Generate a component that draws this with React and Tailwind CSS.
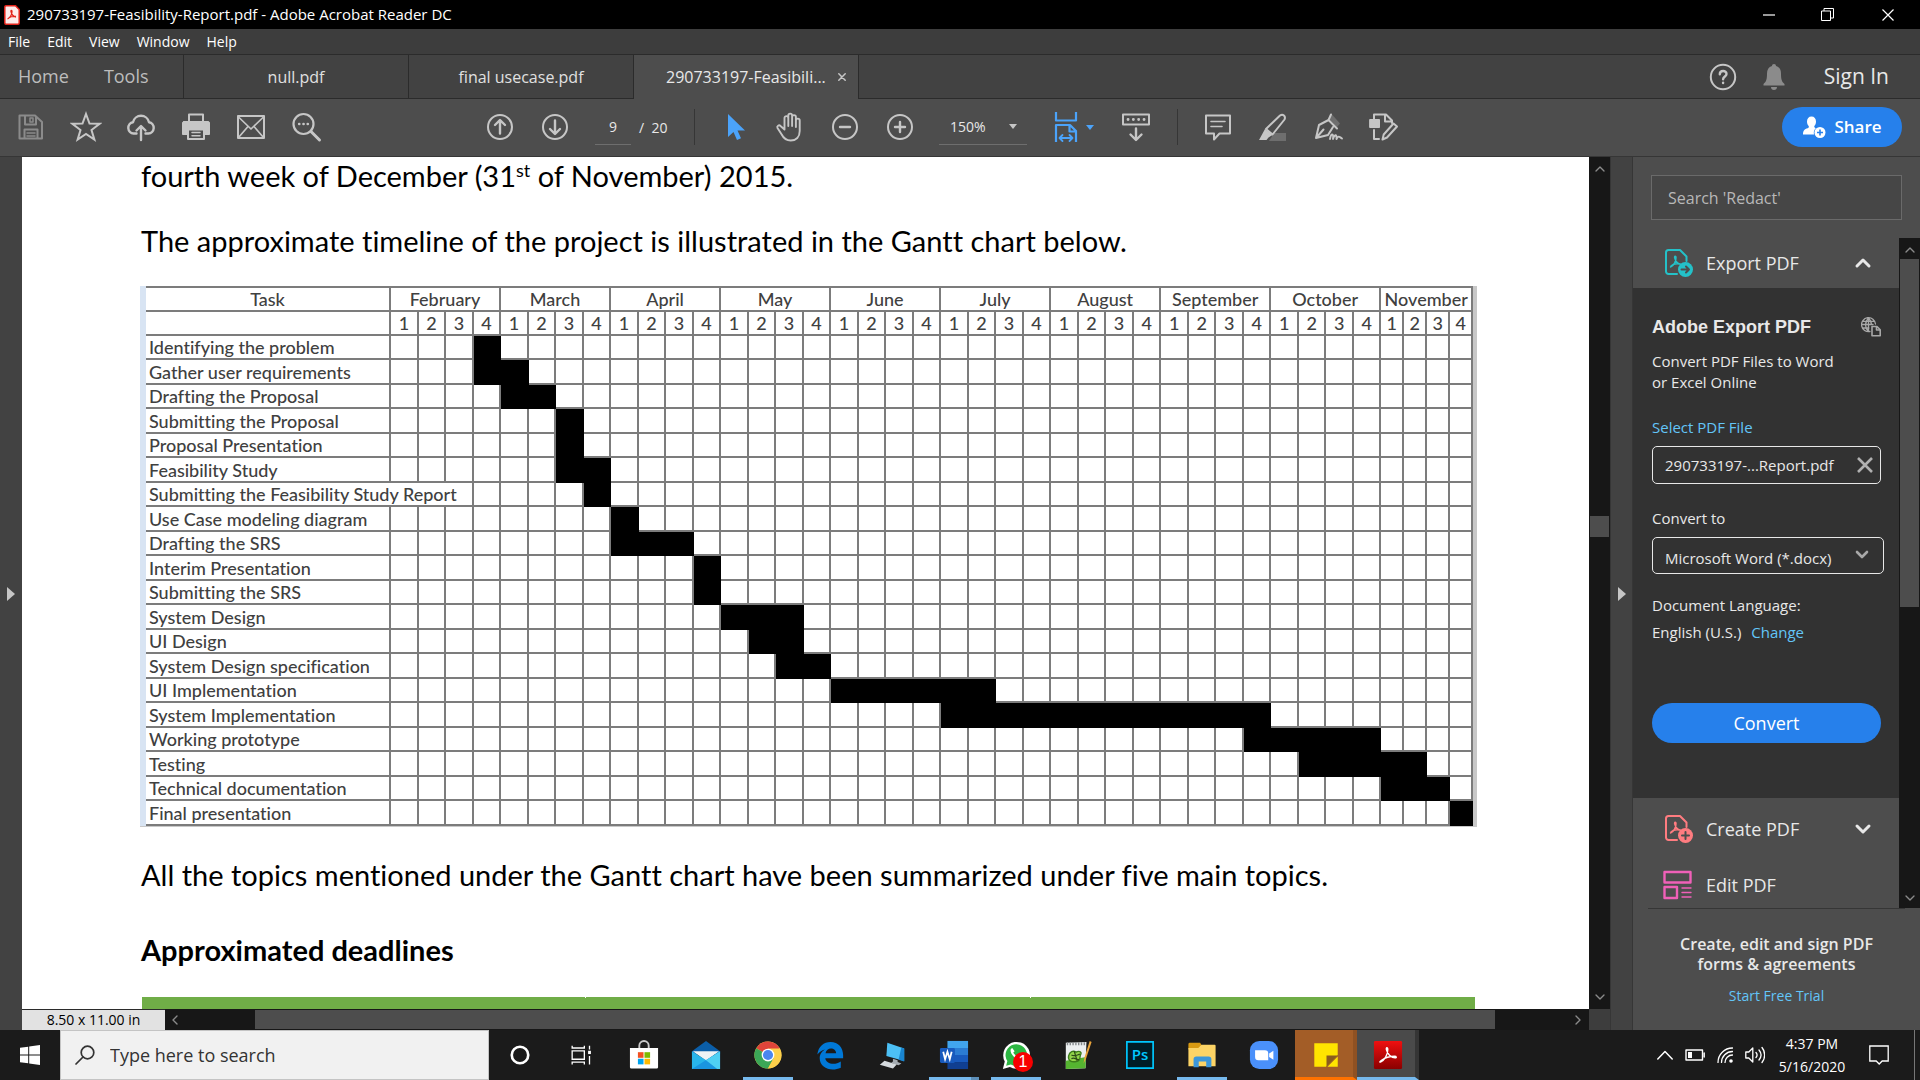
import React from 'react';
import { ChevronUp, ChevronDown, ChevronLeft, ChevronRight } from 'lucide-react';

function Icon({ children, className = 'size-8', box = '0 0 32 32', width = 2 }) {
  return (
    <svg viewBox={box} className={className} fill="none" stroke="currentColor" strokeWidth={width} strokeLinecap="round" strokeLinejoin="round" aria-hidden="true">
      {children}
    </svg>
  );
}

/* ---------- title, menu and tab bars ---------- */

function TitleBar() {
  return (
    <header className="flex h-[29px] shrink-0 items-center bg-black text-white">
      <svg viewBox="0 0 16 20" className="ml-1 h-5 w-4" aria-hidden="true">
        <path d="M2 .8h9.500l3.700 3.700V18a1.200 1.200 0 0 1-1.200 1.200H2A1.200 1.200 0 0 1 .8 18V2A1.200 1.200 0 0 1 2 .8Z" fill="#fdeceb" stroke="#e2231a" strokeWidth="1.500" />
        <path d="M3.500 14c2.500-1 4.500-4.500 4.500-7.500 0-1.500-1.400-1.300-1 .2.500 2.500 2.500 5 5 5.300M4.500 13c2-1.300 4.500-1.800 7.500-1.500" fill="none" stroke="#e2231a" strokeWidth="1.300" />
      </svg>
      <h1 className="ml-[7px] text-[15px]">290733197-Feasibility-Report.pdf - Adobe Acrobat Reader DC</h1>
      <div className="ml-auto flex h-full">
        <button aria-label="Minimize" className="flex w-[58px] items-center justify-center">
          <svg viewBox="0 0 12 12" className="size-3"><path d="M0 6h12" stroke="#fff" strokeWidth="1.200" /></svg>
        </button>
        <button aria-label="Restore" className="flex w-[58px] items-center justify-center">
          <svg viewBox="0 0 13 13" className="size-[13px]" fill="none" stroke="#fff"><path d="M.5 3h9v9.500h-9zM3 3V.5h9.500V10h-3" /></svg>
        </button>
        <button aria-label="Close" className="flex w-16 items-center justify-center">
          <svg viewBox="0 0 12 12" className="size-3" stroke="#fff" strokeWidth="1.200"><path d="M.5.5l11 11M11.500.5l-11 11" /></svg>
        </button>
      </div>
    </header>
  );
}

function MenuBar() {
  return (
    <nav className="flex h-[26px] shrink-0 items-center gap-[17px] border-b border-[#2b2b2b] bg-[#3d3d3d] pl-2 text-[14px] text-white">
      {['File', 'Edit', 'View', 'Window', 'Help'].map((m) => (
        <button key={m}>{m}</button>
      ))}
    </nav>
  );
}

function TabBar() {
  return (
    <div className="flex h-[44px] shrink-0 bg-[#424242]">
      <div className="flex w-[183px] items-center gap-[35px] border-b border-[#2b2b2b] pl-[18px] text-[18px] text-[#bdbdbd]">
        <button>Home</button>
        <button>Tools</button>
      </div>
      <button className="w-[225px] border-b border-l border-[#2b2b2b] text-[16px] text-[#e0e0e0]">null.pdf</button>
      <button className="w-[226px] border-x border-b border-[#2b2b2b] text-[16px] text-[#e0e0e0]">final usecase.pdf</button>
      <div className="flex w-[225px] items-center border-r border-[#2b2b2b] bg-[#4d4d4d] pl-8 text-[16px] text-[#e8e8e8]">
        <span>290733197-Feasibili...</span>
        <button aria-label="Close tab" className="ml-3 text-[#c6c6c6]">
          <Icon box="0 0 8 8" className="size-2" width="1.500"><path d="M.8.8l6.400 6.400M7.200.8L.8 7.200" /></Icon>
        </button>
      </div>
      <div className="flex flex-1 items-center justify-end border-b border-[#2b2b2b] pr-[31px] text-[#c6c6c6]">
        <button aria-label="Help" className="mr-[26px]">
          <Icon className="size-7" box="0 0 28 28">
            <circle cx="14" cy="14" r="12.200" />
            <path d="M10.800 11.300c0-4.300 6.700-4.200 6.700-.4 0 2.500-3.400 2.600-3.400 5.300M14.100 19.600v.4" strokeWidth="2.400" />
          </Icon>
        </button>
        <button aria-label="Notifications" className="mr-[39px] text-[#8b8b8b]">
          <svg viewBox="0 0 22 26" className="h-[26px] w-[22px]" fill="currentColor">
            <path d="M11 0c1.300 0 2 .8 2 1.900 3.500 1 5 3.800 5 7.600 0 6 .7 8 3.500 10.500v1.500H.5V20C3.300 17.500 4 15.500 4 9.500c0-3.800 1.500-6.600 5-7.600C9 .8 9.700 0 11 0ZM8 23h6c0 1.700-1.200 3-3 3s-3-1.300-3-3Z" />
          </svg>
        </button>
        <button className="text-[21px] text-[#e8e8e8]">Sign In</button>
      </div>
    </div>
  );
}

/* ---------- toolbar ---------- */

function Tool({ label, className = 'text-[#c6c6c6]', children }) {
  return (
    <button aria-label={label} className={`flex w-[55px] shrink-0 items-center justify-center ${className}`}>
      {children}
    </button>
  );
}

function Divider() {
  return <div className="h-9 w-px shrink-0 bg-[#363636]" />;
}

function Caret() {
  return <svg viewBox="0 0 8 5" className="h-[5px] w-2" fill="currentColor" aria-hidden="true"><path d="M0 0h8L4 5z" /></svg>;
}

function Toolbar() {
  return (
    <div className="flex h-[58px] shrink-0 items-center border-b border-[#363636] bg-[#4d4d4d] pb-px pl-[3px] text-[#e8e8e8]">
      <Tool label="Save" className="text-[#8b8b8b]">
        <Icon>
          <path d="M4.500 4.500h15.500l7 6.500v16.500H4.500zM10 4.500v9h11V5.500M9.500 27.500V18.500h13v9" />
          <path d="M15 7h3v4h-3zM12 22h8M12 25h8" strokeWidth="1.500" />
        </Icon>
      </Tool>
      <Tool label="Star"><Icon><path d="M16 3l3.500 9.500 10 .3-8 6.200 2.900 9.700L16 23l-8.400 5.700L10.500 19l-8-6.200 10-.3z" strokeLinejoin="miter" /></Icon></Tool>
      <Tool label="Upload"><Icon width="2.400"><path d="M11.500 22.500H8.600A5.700 5.700 0 0 1 8 11.200 8.200 8.200 0 0 1 24 11.200a5.700 5.700 0 0 1-.6 11.300h-2.900M16 29V15.500M11.500 19.500L16 15l4.500 4.500" /></Icon></Tool>
      <Tool label="Print">
        <Icon>
          <path d="M9 10.500V3.500h14v7" />
          <path d="M4 10.500h24a1.500 1.500 0 0 1 1.500 1.500v11.500h-5V19h-17v4.500h-5V12A1.500 1.500 0 0 1 4 10.500Z" fill="currentColor" strokeWidth="1" />
          <path d="M8 18.500h16v9.500H8z" fill="#4d4d4d" />
          <path d="M12 21.500h8M12 24.800h8" strokeWidth="1.500" />
        </Icon>
      </Tool>
      <Tool label="Email"><Icon><path d="M3 5h26v22H3z" /><path d="M3 5.500l13 12.500L29 5.500M3.500 26.500l9.500-11M28.500 26.500l-9.500-11" strokeWidth="1.700" /></Icon></Tool>
      <Tool label="Find"><Icon width="2.200"><circle cx="13.500" cy="13" r="10" /><path d="M21 20.500l8.500 8.500" strokeWidth="3" /><path d="M9.200 13h.1M13.500 13h.1M17.700 13h.1" strokeWidth="2.600" /></Icon></Tool>

      <div className="w-[139px] shrink" />
      <Tool label="Previous page"><Icon><circle cx="16" cy="16" r="12" /><path d="M16 22.500v-13M11 14l5-5 5 5" strokeWidth="2.400" /></Icon></Tool>
      <Tool label="Next page"><Icon><circle cx="16" cy="16" r="12" /><path d="M16 9.500v13M11 18l5 5 5-5" strokeWidth="2.400" /></Icon></Tool>
      <input aria-label="Page number" defaultValue="9" className="ml-[13px] h-9 w-9 shrink-0 border-b border-[#6e6e6e] bg-transparent text-center text-[14px]" />
      <span className="ml-2 w-[55px] shrink-0 whitespace-pre text-[14px]">/  20</span>
      <Divider />
      <div className="w-3 shrink" />
      <Tool label="Select" className="text-[#4ba3fa]">
        <Icon><path d="M9 3v23l5.500-5 3.500 8 4-1.800-3.500-7.700h7.500z" fill="currentColor" strokeWidth="0" /></Icon>
      </Tool>
      <Tool label="Pan">
        <Icon width="1.900">
          <path d="M10.500 18.500V7a1.900 1.900 0 0 1 3.800 0v8V4.500a1.900 1.900 0 0 1 3.800 0V15 6a1.900 1.900 0 0 1 3.800 0v10V9.500a1.900 1.900 0 0 1 3.800 0V20c0 6-3.500 9.500-9 9.500-4.500 0-7-2-9-6l-4.200-6.500c-1-2 1.500-3.500 3-2z" />
        </Icon>
      </Tool>
      <Tool label="Zoom out"><Icon><circle cx="16" cy="16" r="12" /><path d="M11 16h10" strokeWidth="2.400" /></Icon></Tool>
      <Tool label="Zoom in"><Icon><circle cx="16" cy="16" r="12" /><path d="M11 16h10M16 11v10" strokeWidth="2.400" /></Icon></Tool>
      <button className="ml-3 flex h-9 w-[88px] shrink-0 items-center justify-between border-b border-[#6e6e6e] pl-[11px] pr-2.5 text-[14px]">
        150%
        <span className="text-[#c6c6c6]"><Caret /></span>
      </button>
      <button aria-label="Fit width" className="ml-[23px] flex shrink-0 items-center gap-1 text-[#4ba3fa]">
        <Icon width="2.200">
          <path d="M6 1v8.500h20V1M6 31V14h14l6 6v11M19.500 14.500V20.500H26" strokeLinecap="butt" />
          <path d="M9.500 27h13M12.500 24l-3 3 3 3M19.500 24l3 3-3 3" strokeWidth="1.800" />
        </Icon>
        <Caret />
      </button>
      <div className="w-3.5 shrink" />
      <Tool label="Page display">
        <Icon>
          <path d="M3 3.500h26v10H3z" />
          <path d="M8 8.500h.1M13.300 8.500h.1M18.600 8.500h.1M24 8.500h.1" strokeWidth="2.800" />
          <path d="M16 17.500V28M10.500 23.500L16 29l5.500-5.500" strokeWidth="2.400" />
        </Icon>
      </Tool>
      <div className="w-3.5 shrink" />
      <Divider />
      <div className="w-3 shrink" />
      <Tool label="Comment"><Icon><path d="M4 4.500h24v18H17.500l-5.500 6v-6H4z" /><path d="M9 10.500h14M9 15.500h11" strokeWidth="1.600" /></Icon></Tool>
      <Tool label="Highlight">
        <Icon>
          <path d="M12 30l5-8h12v8z" fill="#6e6e6e" strokeWidth="0" />
          <path d="M9 18L23 4.500c3-2 6 .8 4.500 4L15.500 23.500z" />
          <path d="M8 18l7.500 6-4 2.500-2 2.500H2z" fill="currentColor" strokeWidth="0" />
        </Icon>
      </Tool>
      <Tool label="Sign">
        <Icon>
          <path d="M20 3.500l8 9-3 3.500-8-8z" fill="#6e6e6e" strokeWidth="0" />
          <path d="M19 3.500L16.500 9 25 17.500M16.500 9l-9.500 5L4 27l12-3 5-8M4.500 26.500l7-8" />
          <path d="M18 28c1-6 4-6 3 0 1-4 4-6 3.500 0 2-4 3-2 5.500-.5" strokeWidth="1.900" />
        </Icon>
      </Tool>
      <Tool label="More tools">
        <Icon>
          <path d="M7 9V3.500h12l6 6V12M18 4v6.500h7M7 19v9h5" />
          <path d="M3 8.500h9.500v8H3z" fill="currentColor" strokeWidth="1" />
          <path d="M15.500 28.500l1.200-5L26.500 12.500l3.500 3-10 11z" />
        </Icon>
      </Tool>
      <button className="ml-auto mr-[18px] flex h-10 w-[120px] shrink-0 items-center justify-center gap-2 rounded-full bg-[#2680eb] text-[17px] font-semibold text-white">
        <svg viewBox="0 0 24 24" className="size-6" fill="#fff" aria-hidden="true">
          <path d="M9.500 1.500c2.800 0 4.500 2 4.500 5 0 2-.8 3.500-1.700 4.500-.2 1 .2 1.700 1.500 2.300a6.500 6.500 0 0 0-1.800 6.200H1c0-4 1.500-5.300 4.700-6.200C7 12.800 7 12 6.700 11 5.800 10 5 8.500 5 6.500c0-3 1.700-5 4.500-5Z" />
          <circle cx="18" cy="17.500" r="5.500" />
          <path d="M18 14.500v6M15 17.500h6" stroke="#2680eb" strokeWidth="1.600" />
        </svg>
        Share
      </button>
    </div>
  );
}

/* ---------- document ---------- */

const months = ['February', 'March', 'April', 'May', 'June', 'July', 'August', 'September', 'October', 'November'];

// [task, first filled week, last filled week]
const tasks = [
  ['Identifying the problem', 3, 3],
  ['Gather user requirements', 3, 4],
  ['Drafting the Proposal', 4, 5],
  ['Submitting the Proposal', 6, 6],
  ['Proposal Presentation', 6, 6],
  ['Feasibility Study', 6, 7],
  ['Submitting the Feasibility Study Report', 7, 7],
  ['Use Case modeling diagram', 8, 8],
  ['Drafting the SRS', 8, 10],
  ['Interim Presentation', 11, 11],
  ['Submitting the SRS', 11, 11],
  ['System Design', 12, 14],
  ['UI Design', 13, 14],
  ['System Design specification', 14, 15],
  ['UI Implementation', 16, 21],
  ['System Implementation', 20, 31],
  ['Working prototype', 31, 35],
  ['Testing', 33, 37],
  ['Technical documentation', 36, 38],
  ['Final presentation', 39, 39],
];

const weeks = Array.from({ length: 40 }, (_, i) => i);

function weekWidth(i) {
  if (i >= 36) return 'w-[23px]';
  return i % 2 ? 'w-[27px]' : 'w-[28px]';
}

const cell = 'border-b-2 border-r-2 border-[#7c7c7c] p-0 font-medium';

function GanttChart() {
  return (
    <div className="mt-[27px] flex border-b border-r-4 border-[#c8c8c8]">
      <div className="w-1.5 shrink-0 bg-[#d8e4f3]" />
      <table className="w-full table-fixed border-separate border-spacing-0 whitespace-nowrap text-[18px] leading-[22px] text-[#404040]">
        <colgroup>
          <col className="w-[245px]" />
          {weeks.map((w) => <col key={w} className={weekWidth(w)} />)}
        </colgroup>
        <thead>
          <tr className="h-[26px]">
            <th scope="col" className={`${cell} border-t-2`}>Task</th>
            {months.map((m) => (
              <th key={m} scope="colgroup" colSpan={4} className={`${cell} border-t-2`}>{m}</th>
            ))}
          </tr>
          <tr className="h-6">
            <td className={cell} />
            {weeks.map((w) => <th key={w} scope="col" className={cell}>{(w % 4) + 1}</th>)}
          </tr>
        </thead>
        <tbody>
          {tasks.map(([name, from, to], row) => {
            const span = row === 6 ? 4 : 1;
            return (
              <tr key={name} className={row % 2 ? 'h-[25px]' : 'h-6'}>
                <th scope="row" colSpan={span} className={`${cell} pl-[3px] text-left`}>{name}</th>
                {weeks.slice(span - 1).map((w) => (
                  <td key={w} className={w >= from && w <= to ? 'border-b-2 border-r-2 border-black bg-black p-0' : cell} />
                ))}
              </tr>
            );
          })}
        </tbody>
      </table>
    </div>
  );
}

function Page() {
  return (
    <main className="min-w-0 flex-1 overflow-hidden bg-white pl-[118px] pr-[112px] pt-px font-[Lato,'Liberation_Sans',sans-serif] text-[29px] leading-[36px] text-black [font-variant-ligatures:none]">
      <p className="pl-px">fourth week of December (31<sup className="-top-2.5 text-[18px] leading-none">st</sup> of November) 2015.</p>
      <p className="mt-[29px] pl-px">The approximate timeline of the project is illustrated in the Gantt chart below.</p>
      <GanttChart />
      <p className="mt-[30px] pl-px">All the topics mentioned under the Gantt chart have been summarized under five main topics.</p>
      <h2 className="mt-[39px] pl-px text-[29px] font-bold">Approximated deadlines</h2>
      <div className="ml-0.5 mr-0.5 mt-[29px] grid h-10 grid-cols-3 bg-[#70ad47]">
        <div className="h-px border-r border-white" />
        <div className="h-px border-r border-white" />
      </div>
    </main>
  );
}

function DocumentPane() {
  return (
    <section className="flex min-w-0 flex-1 flex-col">
      <div className="flex min-h-0 flex-1">
        <Page />
        <div className="flex w-[21px] shrink-0 flex-col items-center bg-[#171717] text-[#8b8b8b]">
          <ChevronUp className="mt-1 size-4" />
          <div className="mt-[339px] h-[21px] w-[19px] bg-[#4d4d4d]" />
          <ChevronDown className="mb-1 mt-auto size-4" />
        </div>
      </div>
      <div className="flex h-[21px] shrink-0">
        <div className="flex w-[143px] items-center justify-center border-t border-[#2b2b2b] bg-[#e2e2e2] text-[14px] leading-5 text-black">8.50 x 11.00 in</div>
        <div className="flex flex-1 items-center bg-[#171717] text-[#8b8b8b]">
          <ChevronLeft className="mx-0.5 size-4" />
          <div className="ml-[70px] mr-[74px] h-[19px] flex-1 bg-[#4d4d4d]" />
          <ChevronRight className="ml-px mr-[3px] size-4" />
        </div>
        <div className="w-[21px] bg-[#3d3d3d]" />
      </div>
    </section>
  );
}

/* ---------- tools pane ---------- */

function PdfFileIcon({ children }) {
  return (
    <Icon className="size-[30px]" box="0 0 30 30">
      <path d="M13 26H4.500A2.500 2.500 0 0 1 2 23.500v-19A2.500 2.500 0 0 1 4.500 2H16l6.500 6.500V13" />
      <path d="M6.500 19c3-1.200 5.700-5.500 5.500-9.500 0-1.800-1.800-1.500-1.300.3.700 3 3 6 6.300 6.400M7 18c1.500-1.500 5-2.500 8.500-2" strokeWidth="1.500" />
      <circle cx="21.500" cy="21.500" r="7.500" fill="currentColor" stroke="none" />
      {children}
    </Icon>
  );
}

function ToolsPane() {
  return (
    <aside className="flex w-[287px] shrink-0 flex-col bg-[#4d4d4d] text-[#e8e8e8]">
      <input aria-label="Search tools" placeholder="Search 'Redact'" className="mx-[18px] mb-[18px] mt-[18px] h-[45px] shrink-0 border border-[#6a6a6a] bg-[#464646] px-4 text-[16px] placeholder:text-[#b8b8b8]" />
      <div className="flex min-h-0 flex-1">
        <div className="min-w-0 flex-1 overflow-hidden">
          <button className="flex h-[50px] w-full items-center pl-[31px] pr-[26px] text-[18px]">
            <span className="text-[#24c1c8]"><PdfFileIcon><path d="M17.500 21.500h7.500M22 18.500l3 3-3 3" stroke="#4d4d4d" /></PdfFileIcon></span>
            <span className="ml-3">Export PDF</span>
            <Icon className="ml-auto size-5" box="0 0 20 20" width="3"><path d="M4 13l6-6 6 6" /></Icon>
          </button>

          <div className="flex flex-col bg-[#323232] pb-[55px] pl-[19px] pr-[15px] pt-[27px] text-[15px] leading-5">
            <div className="mr-[3px] flex items-center justify-between">
              <h2 className="font-['Liberation_Sans',sans-serif] text-[18px] font-bold leading-6">Adobe Export PDF</h2>
              <Icon className="size-5 text-[#a8a8a8]" box="0 0 20 20" width="1.300">
                <path d="M9 14.500A7 7 0 1 1 14.500 7M7.500 1c-4 4-4 9.500 0 13.500M7.500 1c2 2 3 4 3 6.500M1 7.500h11M2 4.300h11M2 11h6M7.500 1v13.500" />
                <path d="M11 9.500h5l3.200 3.200v6H11zM15.500 10v3h3.500" strokeWidth="1.600" />
              </Icon>
            </div>
            <p className="mt-3 leading-[21px]">Convert PDF Files to Word<br />or Excel Online</p>
            <label htmlFor="source-file" className="mt-6 text-[#63c5f8]">Select PDF File</label>
            <div className="mr-[3px] mt-[9px] flex h-[38px] items-center rounded-[5px] border border-[#e8e8e8] pl-3 pr-[7px]">
              <input id="source-file" readOnly value="290733197-...Report.pdf" className="min-w-0 flex-1 bg-transparent" />
              <button aria-label="Remove file" className="text-[#b0b0b0]">
                <Icon className="size-4" box="0 0 16 16" width="2.600"><path d="M1 1l14 14M15 1L1 15" strokeLinecap="butt" /></Icon>
              </button>
            </div>
            <label htmlFor="target-format" className="mt-6">Convert to</label>
            <div className="relative mt-[9px]">
              <select id="target-format" className="block h-[37px] w-full appearance-none rounded-[5px] border border-[#e8e8e8] bg-[#323232] pl-3 pr-8 pt-1">
                <option>Microsoft Word (*.docx)</option>
              </select>
              <Icon className="pointer-events-none absolute right-3.5 top-2.5 size-4 text-[#a8a8a8]" box="0 0 16 16" width="2.600"><path d="M3 5l5 5 5-5" /></Icon>
            </div>
            <p className="mt-[21px]">Document Language:</p>
            <p className="mt-[7px]">English (U.S.) <a href="#language" className="ml-1.5 text-[#63c5f8]">Change</a></p>
            <button className="mr-[3px] mt-[61px] h-10 rounded-full bg-[#2680eb] text-[18px] text-white">Convert</button>
          </div>

          <button className="mt-[3px] flex h-14 w-full items-center pl-[31px] pr-[26px] text-[18px]">
            <span className="text-[#ff7c80]"><PdfFileIcon><path d="M18 21.500h7M21.500 18v7" stroke="#4d4d4d" /></PdfFileIcon></span>
            <span className="ml-3">Create PDF</span>
            <Icon className="ml-auto size-5" box="0 0 20 20" width="3"><path d="M4 7l6 6 6-6" /></Icon>
          </button>
          <button className="flex h-14 w-full items-center pl-[30px] text-[18px]">
            <Icon className="size-[30px] text-[#f060b8]" box="0 0 30 30">
              <path d="M1.500 2h26v10.500h-26zM1.500 17h12.500v11H1.500z" strokeWidth="2.400" />
              <path d="M19 18h9M19 22.500h9M19 27h9" strokeWidth="1.400" />
            </Icon>
            <span className="ml-[13px]">Edit PDF</span>
          </button>
        </div>
        <div className="flex w-[21px] shrink-0 flex-col items-center bg-[#171717] text-[#8b8b8b]">
          <ChevronUp className="mb-px mt-1 size-4" />
          <div className="h-[52%] w-[19px] bg-[#4d4d4d]" />
          <ChevronDown className="mb-0.5 mt-auto size-4" />
        </div>
      </div>
      <div className="mx-[15px] flex h-[122px] shrink-0 flex-col items-center border-t border-[#363636] pt-[25px] text-center text-[16px] font-semibold leading-5">
        <p>Create, edit and sign PDF<br />forms &amp; agreements</p>
        <a href="#trial" className="mt-3 text-[14px] font-normal text-[#63c5f8]">Start Free Trial</a>
      </div>
    </aside>
  );
}

/* ---------- task bar ---------- */

function Art({ box = '0 0 32 32', children }) {
  return <svg viewBox={box} className="size-[30px]" fill="none" aria-hidden="true">{children}</svg>;
}

const apps = [
  ['Cortana', '', <Art><circle cx="16" cy="16" r="8.800" stroke="#fff" strokeWidth="2.800" /></Art>],
  ['Task View', '', <Art><path d="M5.500 11.500h13v9h-13zM5.500 6v2.500h13V6M5.500 26v-2.500h13V26M24 6v4M24 17v9" stroke="#fff" strokeWidth="1.400" /><path d="M22.500 11.500h3v3.500h-3z" fill="#fff" /></Art>],
  ['Microsoft Store', '', (
    <Art>
      <path d="M11 10V6a5 5 0 0 1 10 0v4" stroke="#c9c9c9" strokeWidth="2" />
      <path d="M1 8.500h30V29a1.500 1.500 0 0 1-1.500 1.500h-27A1.500 1.500 0 0 1 1 29z" fill="#fff" />
      <path d="M9.500 13h6v6h-6z" fill="#f25022" /><path d="M16.500 13h6v6h-6z" fill="#7fba00" />
      <path d="M9.500 20h6v6h-6z" fill="#00a4ef" /><path d="M16.500 20h6v6h-6z" fill="#ffb900" />
    </Art>
  )],
  ['Mail', '', (
    <Art>
      <path d="M1 12L16 1l15 11v3H1z" fill="#0b5ea8" /><path d="M2 12h28L16 22z" fill="#eef2f5" />
      <path d="M1 12l30 19H1z" fill="#28b4ea" /><path d="M31 12v19H1z" fill="#1a95e0" /><path d="M31 12v19H28L16 21.500z" fill="#4fd0f3" />
    </Art>
  )],
  ['Google Chrome', 'open', (
    <Art>
      <circle cx="16" cy="16" r="14.500" fill="#fdd04b" />
      <path d="M16 16L3.500 8.700A14.500 14.500 0 0 1 28.500 8.700z" fill="#e0453a" /><path d="M3.500 8.700A14.500 14.500 0 0 0 16 30.500l6-11L16 16z" fill="#3ba757" />
      <path d="M28.500 9H16l6 10.500L16 30.500A14.500 14.500 0 0 0 28.500 9Z" fill="#fdd04b" />
      <circle cx="16" cy="16" r="6.800" fill="#fff" /><circle cx="16" cy="16" r="5.400" fill="#4a86f0" />
    </Art>
  )],
  ['Microsoft Edge', '', <Art><path d="M2.500 15.500C3.500 6.500 9.500 2 16.500 2 25 2 30 8 30 16v3.500H11c.5 6 10 8 16.500 3.500v6.500C18 34 5 30.500 5 19.500 5 15 7.500 11.500 11 10c-3 .3-6.500 2.500-8.500 5.500ZM11.200 14h11.300c0-6.500-10.300-7-11.300 0Z" fill="#0078d7" /></Art>],
  ['This PC', '', (
    <Art>
      <path d="M11 3l18 6v13.500L10 17z" fill="#4cc0f5" /><path d="M29 9v14l-6-2 3-13z" fill="#1985d0" />
      <path d="M17 20l5 1.500v2l4 1.500-3 2-8-2.500 2-1.500z" fill="#a5acb2" /><path d="M8 22l13 4-4 4.500-14-4z" fill="#d5dade" />
    </Art>
  )],
  ['Word', 'group', (
    <Art>
      <path d="M9 1h22v8H9z" fill="#41a5ee" /><path d="M9 8.500h22v8H9z" fill="#2b7cd3" /><path d="M9 16h22v7.500H9z" fill="#185abd" /><path d="M9 23.500h22V31H9z" fill="#103f91" />
      <rect x="1" y="8.500" width="16" height="16" rx="1.500" fill="#185abd" /><path d="M4.500 12.500l2 8 2.500-8 2.500 8 2-8" stroke="#fff" strokeWidth="1.900" />
    </Art>
  )],
  ['WhatsApp', 'open', (
    <Art>
      <path d="M2 31l2-8A14.300 14.300 0 1 1 9.500 28.700z" fill="#fff" /><path d="M5.500 27.500l1.300-5A11.500 11.500 0 1 1 10.500 26z" fill="#2cb742" />
      <path d="M12 8.500c-3 1-2 5 1 8.500 3 3.500 7 5.500 9 3l-3-3-2 1-4-4.500 1.500-1.500z" fill="#fff" />
    </Art>
  )],
  ['Notepad++', '', (
    <Art>
      <path d="M3 3l22-1-1 28-21 1z" fill="#eceff0" /><path d="M3 22l21.500-4L24 30 3 31z" fill="#55b530" />
      <path d="M4 4h20" stroke="#85898b" strokeWidth="3" strokeDasharray="1.500 1.500" />
      <path d="M6 17c1-5 5-6 8-4 3-2 6 0 5 2-2 3 1 7-5 8-5 1-9-1-8-6Z" fill="#93d54a" stroke="#3c7d1b" strokeWidth="1.500" />
      <path d="M9 16c3 2 6 0 9-1M9 20c3-2 5 1 8 1M12 12l3 10" stroke="#2d4a18" strokeWidth="1.300" />
      <path d="M30.500 2l-6 18-2.500 5 .8-6L28.500 1z" fill="#e9a33a" />
    </Art>
  )],
  ['Photoshop', '', (
    <svg viewBox="0 0 32 32" className="size-[30px]" aria-hidden="true">
      <path d="M2 2h28v28H2z" fill="#001d26" stroke="#00c8ff" strokeWidth="1.800" />
      <text x="16" y="21.500" textAnchor="middle" fontSize="16" fontWeight="600" fontFamily="Open Sans, sans-serif" fill="#00c8ff">Ps</text>
    </svg>
  )],
  ['File Explorer', 'open', (
    <Art>
      <path d="M1.500 4.500A1.500 1.500 0 0 1 3 3h11l2 3V10H1.500z" fill="#d99a12" /><path d="M1.500 8.500H12L15.500 5H29.500a1 1 0 0 1 1 1v22h-29z" fill="#fcd466" />
      <path d="M7 29V20.500a3 3 0 0 1 3-3h13a3 3 0 0 1 3 3V29h-5.500V23h-8v6z" fill="#3b97da" />
    </Art>
  )],
  ['Zoom', '', <Art><rect x="1" y="1" width="30" height="30" rx="10" fill="#4a90fa" /><path d="M6.500 11h10.500a3.500 3.500 0 0 1 3.500 3.500V21.500H10A3.500 3.500 0 0 1 6.500 18zM21.500 14.500l4.500-3v9.500l-4.500-3z" fill="#fff" /></Art>],
  ['Sticky Notes', 'alert', <Art><path d="M3.500 3.500h25V16L16 28.500H3.500z" fill="#ffe500" /><path d="M16.500 16.500h12l-12 12z" fill="#8a5c1e" /><path d="M17.500 28.500l11-11v11z" fill="#ffe500" /></Art>],
  ['Acrobat Reader', 'active', (
    <Art>
      <defs><linearGradient id="acro" x1="0" y1="0" x2="0" y2="1"><stop offset="0" stopColor="#f01010" /><stop offset="1" stopColor="#8a0000" /></linearGradient></defs>
      <rect x="1" y="1" width="30" height="30" rx="1.500" fill="url(#acro)" />
      <path d="M8 23.500c4-1.500 8-8 7.800-13.500-.1-2.500-2-2.200-1.500.3 1 4.500 4.700 8.500 9.200 8.800 2 0 1.700-1.700-.5-1.700-4.500.2-9.500 1.300-13.500 3.900-2.200 1.500-2.800 2.700-1.500 2.200Z" stroke="#fff" strokeWidth="1.500" />
    </Art>
  )],
];

const appLook = { '': '', open: '', group: '', alert: 'bg-[#a35d27]', active: 'bg-[#4a4a4a]' };

function TaskApp({ name, state, art }) {
  return (
    <button aria-label={name} className={`relative flex w-[62px] shrink-0 items-center justify-center ${appLook[state]}`}>
      {art}
      {name === 'WhatsApp' && <span className="absolute bottom-2 right-3.5 flex size-5 items-center justify-center rounded-full bg-[#f80000] font-['Liberation_Sans',sans-serif] text-[16px] text-white">1</span>}
      {state === 'open' && <span className="absolute inset-x-1.5 bottom-0 h-[3px] bg-[#76b9ed]" />}
      {state === 'group' && <span className="absolute inset-x-1.5 bottom-0 h-[3px] border-r-8 border-[#5d8fb8] bg-[#76b9ed]" />}
      {state === 'alert' && <span className="absolute inset-0 border-b-[3px] border-r-4 border-b-[#ff7200] border-r-[#8f5122]" />}
      {state === 'active' && <span className="absolute inset-0 border-b-[3px] border-r-4 border-b-[#76b9ed] border-r-[#353535]" />}
    </button>
  );
}

function TaskBar() {
  return (
    <footer className="flex h-[50px] shrink-0 bg-[#1b1b1b] text-white">
      <button aria-label="Start" className="flex w-[60px] shrink-0 items-center justify-center">
        <svg viewBox="0 0 20 20" className="size-5" fill="#fff"><path d="M0 2.800l8.200-1.100v7.800H0zM9.200 1.600L20 0v9.500H9.200zM0 10.500h8.200v7.800L0 17.200zM9.200 10.500H20V20L9.200 18.400z" /></svg>
      </button>
      <label className="flex w-[429px] shrink items-center border border-[#c4c4c4] bg-[#f1f1f1] pl-3.5 text-[#333333]">
        <Icon className="size-5" box="0 0 20 20" width="1.700"><circle cx="12.500" cy="7.500" r="6.300" /><path d="M8 12l-7 7" /></Icon>
        <input aria-label="Type here to search" placeholder="Type here to search" className="ml-[15px] min-w-0 flex-1 bg-transparent text-[18px] placeholder:text-[#333333]" />
      </label>
      {apps.map(([name, state, art]) => <TaskApp key={name} name={name} state={state} art={art} />)}
      <div className="ml-auto flex items-center">
        <button aria-label="Show hidden icons" className="flex w-[30px] justify-center">
          <Icon className="size-4" box="0 0 16 16" width="1.500"><path d="M.8 12L8 4.500l7.200 7.500" /></Icon>
        </button>
        <button aria-label="Battery" className="flex w-[30px] justify-center">
          <Icon className="size-5" box="0 0 20 20" width="1.400"><path d="M1 5h16.500v10H1zM19.200 8v4" /><path d="M3 7h4v6H3z" fill="currentColor" stroke="none" /></Icon>
        </button>
        <button aria-label="Network" className="flex w-[30px] justify-center">
          <Icon className="size-4" box="0 0 16 16" width="1.300">
            <path d="M1 15.500A14.500 14.500 0 0 1 15.500 1M4.500 15.500a11 11 0 0 1 11-11M8 15.500A7.500 7.500 0 0 1 15.500 8" />
            <circle cx="14" cy="14" r="1.800" fill="currentColor" stroke="none" />
          </Icon>
        </button>
        <button aria-label="Volume" className="flex w-[30px] justify-center">
          <Icon className="size-5" box="0 0 20 20" width="1.300"><path d="M.8 7h3l4-4v14l-4-4h-3zM11 7.500c1.300 1.500 1.300 3.500 0 5M14 5c2.500 3 2.500 7 0 10M17 2.500c3.500 4.500 3.500 10.500 0 15" /></Icon>
        </button>
        <time className="w-[84px] text-center text-[14px] leading-[23px]">4:37 PM<br />5/16/2020</time>
        <button aria-label="Action center" className="flex w-[50px] justify-center">
          <Icon className="size-5" box="0 0 20 20" width="1.300"><path d="M.8 1h18.400v15h-6l-3 3-3-3H.8z" strokeLinejoin="miter" /></Icon>
        </button>
        <button aria-label="Show desktop" className="ml-2.5 h-[50px] w-1.5 border-l border-[#777777]" />
      </div>
    </footer>
  );
}

export default function App() {
  return (
    <div className="flex h-screen flex-col overflow-hidden bg-[#424242] font-['Open_Sans','Noto_Sans',sans-serif]">
      <TitleBar />
      <MenuBar />
      <TabBar />
      <Toolbar />
      <div className="flex min-h-0 flex-1">
        <button aria-label="Show navigation pane" className="flex w-[22px] shrink-0 items-center justify-center text-[#c6c6c6]">
          <svg viewBox="0 0 8 14" className="h-3.5 w-2" fill="currentColor"><path d="M0 0l8 7-8 7z" /></svg>
        </button>
        <DocumentPane />
        <button aria-label="Hide tools pane" className="flex w-[23px] shrink-0 items-center justify-center border-x border-[#363636] text-[#c6c6c6]">
          <svg viewBox="0 0 8 14" className="h-3.5 w-2" fill="currentColor"><path d="M0 0l8 7-8 7z" /></svg>
        </button>
        <ToolsPane />
      </div>
      <TaskBar />
    </div>
  );
}
